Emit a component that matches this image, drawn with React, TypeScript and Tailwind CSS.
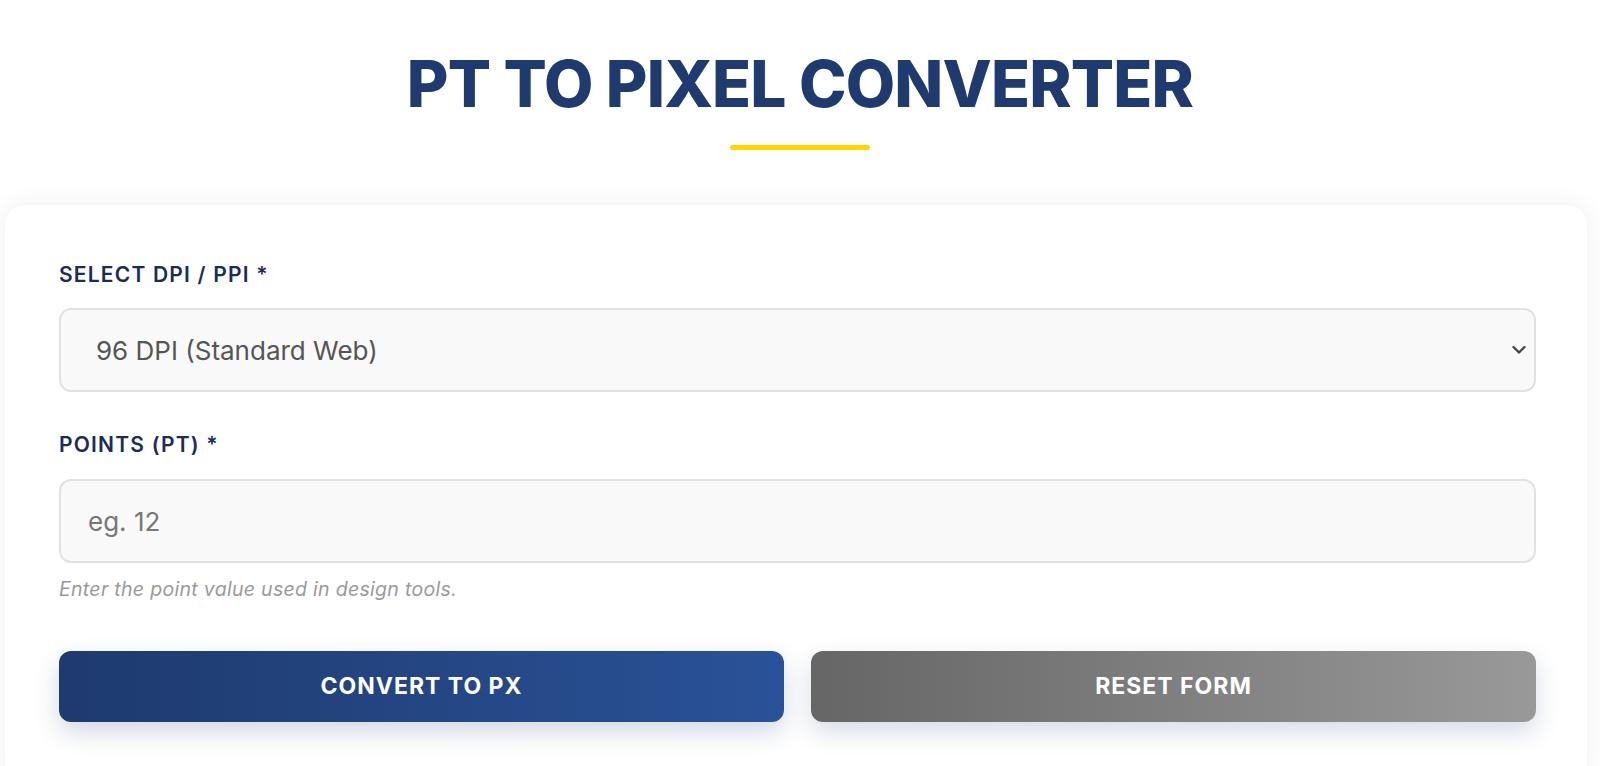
import React, { useState } from 'react';

const dpiOptions = [
  { value: '72', label: '72 DPI (Mac / Legacy)' },
  { value: '96', label: '96 DPI (Standard Web)' },
  { value: '150', label: '150 DPI (Medium Print)' },
  { value: '300', label: '300 DPI (High Print)' },
];

const App: React.FC = () => {
  const [dpi, setDpi] = useState('96');
  const [points, setPoints] = useState('');

  return (
    <div className="min-h-screen bg-white font-['Inter',sans-serif] pt-[42px] overflow-hidden">
      <h1 className="text-center text-[64px] leading-[84px] font-extrabold text-[#1e3a6f] tracking-[-0.8px]">
        PT TO PIXEL CONVERTER
      </h1>
      <div className="mx-auto mt-[19px] h-[5px] w-[140px] rounded-full bg-[#ffd600]" />

      <div className="ml-[5px] mt-[55px] w-[1582px] rounded-[20px] bg-white pl-[54px] pr-[51px] pt-[55px] pb-[60px] shadow-[0_0_24px_rgba(0,0,0,0.07)]">
        <label className="block text-[21px] leading-[30px] font-semibold tracking-[1.2px] text-[#1a2c5b]">
          SELECT DPI / PPI *
        </label>
        <div className="relative mt-[18px]">
          <select
            value={dpi}
            onChange={e => setDpi(e.target.value)}
            className="block h-[84px] w-full appearance-none rounded-[12px] border-2 border-[#e2e2e2] bg-[#f9f9f9] pl-[35px] pr-[50px] text-[26px] text-[#555] outline-none"
          >
            {dpiOptions.map(o => (
              <option key={o.value} value={o.value}>
                {o.label}
              </option>
            ))}
          </select>
          <svg
            className="pointer-events-none absolute right-[10px] top-1/2 -translate-y-1/2"
            width="14"
            height="9"
            viewBox="0 0 14 9"
            fill="none"
          >
            <path d="M1.5 1.5L7 7L12.5 1.5" stroke="#444" strokeWidth="2.4" strokeLinecap="round" strokeLinejoin="round" />
          </svg>
        </div>

        <label className="mt-[38px] block text-[21px] leading-[30px] font-semibold tracking-[1.2px] text-[#1a2c5b]">
          POINTS (PT) *
        </label>
        <input
          type="number"
          value={points}
          onChange={e => setPoints(e.target.value)}
          placeholder="eg. 12"
          className="mt-[19px] block h-[84px] w-full rounded-[12px] border-2 border-[#e2e2e2] bg-[#f9f9f9] px-[27px] text-[26px] text-[#555] placeholder:text-[#777] outline-none"
        />
        <p className="mt-[13px] text-[19.5px] leading-[26px] italic tracking-[0.3px] text-[#9a9a9a]">
          Enter the point value used in design tools.
        </p>

        <div className="mt-[49px] grid grid-cols-2 gap-[27px]">
          <button className="h-[71px] rounded-[12px] bg-linear-to-r from-[#1e3a6e] to-[#2a5298] text-[23px] font-bold tracking-[1px] text-white shadow-[0_10px_24px_rgba(30,60,114,0.2)]">
            CONVERT TO PX
          </button>
          <button
            onClick={() => setPoints('')}
            className="h-[71px] rounded-[12px] bg-linear-to-r from-[#666666] to-[#999999] text-[23px] font-bold tracking-[1px] text-white shadow-[0_10px_24px_rgba(30,60,114,0.18)]"
          >
            RESET FORM
          </button>
        </div>
      </div>
    </div>
  );
};

export default App;
